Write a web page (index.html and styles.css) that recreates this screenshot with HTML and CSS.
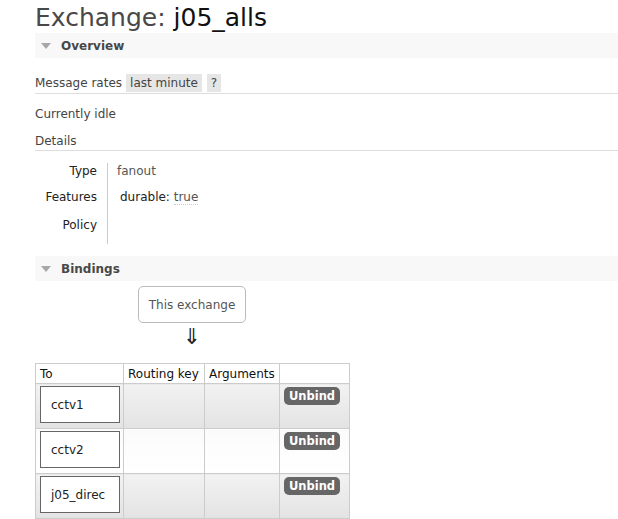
FILE: index.html
```html
<!DOCTYPE html>
<html>
<head>
<meta charset="utf-8">
<link rel="stylesheet" href="styles.css">
</head>
<body>
<div class="page">
  <h1 class="title">Exchange: <b>j05_alls</b></h1>

  <div class="section-bar"><span class="tri"></span>Overview</div>

  <div class="rates-row">
    <span class="rates-label">Message rates</span>
    <span class="pill">last minute</span>
    <span class="pill q">?</span>
  </div>

  <div class="idle">Currently idle</div>

  <div class="details-head">Details</div>

  <div class="facts">
    <div class="fact-labels">
      <div class="fl r1">Type</div>
      <div class="fl r2">Features</div>
      <div class="fl r3">Policy</div>
    </div>
    <div class="fact-values">
      <div class="fv r1 muted">fanout</div>
      <div class="fv r2 feat">durable: <span class="abbr">true</span></div>
      <div class="fv r3"></div>
    </div>
  </div>

  <div class="section-bar bindings"><span class="tri"></span>Bindings</div>

  <div class="flow">
    <div class="this-ex">This exchange</div>
    <div class="arrow">&#8659;</div>
  </div>

  <table class="bind-table">
    <thead>
      <tr>
        <th class="c-to">To</th>
        <th class="c-rk">Routing key</th>
        <th class="c-args">Arguments</th>
        <th class="c-act"></th>
      </tr>
    </thead>
    <tbody>
      <tr class="alt1">
        <td><div class="q-box">cctv1</div></td>
        <td></td><td></td>
        <td class="act"><span class="btn">Unbind</span></td>
      </tr>
      <tr class="alt2">
        <td><div class="q-box">cctv2</div></td>
        <td></td><td></td>
        <td class="act"><span class="btn">Unbind</span></td>
      </tr>
      <tr class="alt1">
        <td><div class="q-box">j05_direc</div></td>
        <td></td><td></td>
        <td class="act"><span class="btn">Unbind</span></td>
      </tr>
    </tbody>
  </table>
</div>
</body>
</html>
```

FILE: styles.css
```css
html, body {
  margin: 0;
  padding: 0;
  background: #fff;
}

body {
  font-family: "DejaVu Sans", Verdana, sans-serif;
  font-size: 12px;
  color: #444;
}

.page {
  padding: 0 0 0 35px;
  width: 583px;
}

.title {
  margin: 0;
  padding-top: 3px;
  height: 30px;
  font-size: 25px;
  line-height: 30px;
  font-weight: normal;
  color: #484848;
}

.title b {
  font-weight: normal;
  color: #111;
}

.section-bar {
  display: flex;
  align-items: center;
  height: 25px;
  background: #f8f8f8;
  font-weight: bold;
  color: #484848;
  font-size: 12px;
}

.tri {
  width: 0;
  height: 0;
  margin: 0 10px 0 6px;
  border-left: 5px solid transparent;
  border-right: 5px solid transparent;
  border-top: 6px solid #a8a8a8;
}

.rates-row {
  margin-top: 16px;
  display: flex;
  align-items: stretch;
  height: 18px;
  line-height: 18px;
  border-bottom: 1px solid #ddd;
  padding-bottom: 1px;
}

.rates-label {
  margin-right: 4px;
}

.pill {
  background: #e6e6e6;
  padding: 0 4px;
  margin-right: 5px;
}

.idle {
  margin-top: 12px;
  height: 16px;
  line-height: 16px;
}

.details-head {
  margin-top: 11px;
  height: 16px;
  line-height: 16px;
  padding-bottom: 1px;
  border-bottom: 1px solid #ddd;
}

.facts {
  display: flex;
  margin-top: 12px;
}

.fact-labels {
  width: 62px;
  padding-right: 10px;
  text-align: right;
  color: #222;
}

.fact-values {
  border-left: 1px solid #ccc;
  padding-left: 9px;
  padding-bottom: 11px;
}

.fl, .fv {
  height: 16px;
  line-height: 16px;
}

.r2 {
  margin-top: 10px;
}

.r3 {
  margin-top: 12px;
}

.muted {
  color: #555;
}

.feat {
  color: #222;
  padding-left: 3px;
}

.abbr {
  color: #555;
  border-bottom: 1px dotted #ccc;
}

.bindings {
  margin-top: 12px;
}

.flow {
  display: flex;
  flex-direction: column;
  align-items: flex-start;
  padding-left: 103px;
}

.this-ex {
  margin-top: 5px;
  width: 106px;
  height: 35px;
  border: 1px solid #bbb;
  border-radius: 5px;
  display: flex;
  align-items: center;
  justify-content: center;
  color: #555;
}

.arrow {
  width: 108px;
  text-align: center;
  font-size: 22px;
  line-height: 22px;
  height: 22px;
  margin-top: 3px;
  color: #222;
}

.bind-table {
  margin-top: 15px;
  border-collapse: collapse;
  border: 1px solid #ccc;
}

.bind-table th {
  height: 19px;
  padding: 0 4px;
  text-align: left;
  font-weight: normal;
  color: #111;
  border: 1px solid #ccc;
  background: #fff;
  white-space: nowrap;
}

.c-to { width: 79px; }
.c-rk { width: 72px; }
.c-args { width: 66px; }
.c-act { width: 61px; }

.bind-table td {
  height: 44px;
  padding: 0;
  border: 1px solid #ccc;
  vertical-align: top;
}

.alt1 td {
  background: linear-gradient(#f2f2f2, #e3e3e3);
}

.alt2 td {
  background: linear-gradient(#fbfbfb, #ffffff);
}

.q-box {
  margin: 2px 3px 0 4px;
  height: 35px;
  border: 1px solid #666;
  background: #fff;
  display: flex;
  align-items: center;
  padding-left: 10px;
  color: #222;
}

.bind-table td.act {
  padding-left: 4px;
}

.btn {
  display: inline-block;
  margin-top: 3px;
  width: 56px;
  height: 18px;
  line-height: 18px;
  background: #666;
  color: #fff;
  font-weight: bold;
  font-size: 11.5px;
  text-align: center;
  border-radius: 5px;
}
```
